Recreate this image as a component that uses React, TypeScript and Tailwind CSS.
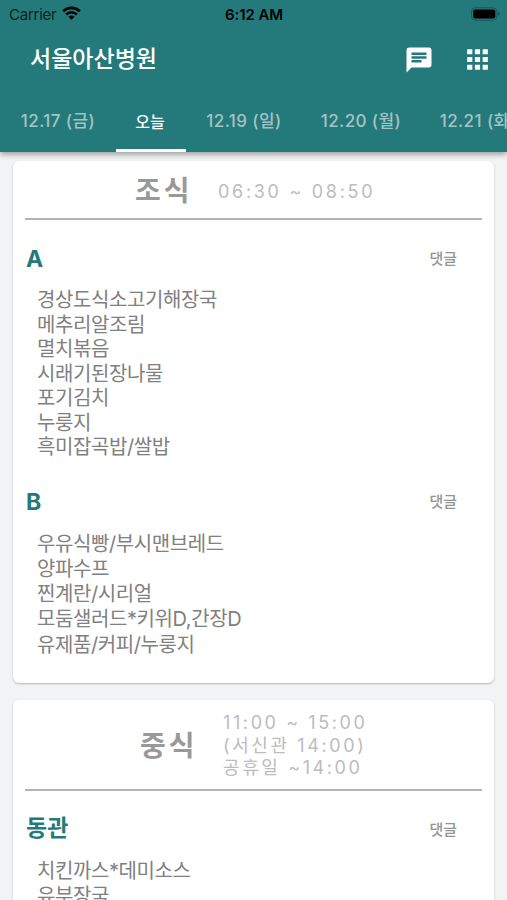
import clsx from 'clsx'

interface Course {
  name: string
  menu: string[]
}

interface Meal {
  title: string
  hours: string[]
  courses: Course[]
}

const TABS = ['12.17 (금)', '오늘', '12.19 (일)', '12.20 (월)', '12.21 (화)']

const MEALS: Meal[] = [
  {
    title: '조식',
    hours: ['06:30 ~ 08:50'],
    courses: [
      {
        name: 'A',
        menu: [
          '경상도식소고기해장국',
          '메추리알조림',
          '멸치볶음',
          '시래기된장나물',
          '포기김치',
          '누룽지',
          '흑미잡곡밥/쌀밥',
        ],
      },
      {
        name: 'B',
        menu: [
          '우유식빵/부시맨브레드',
          '양파수프',
          '찐계란/시리얼',
          '모둠샐러드*키위D,간장D',
          '유제품/커피/누룽지',
        ],
      },
    ],
  },
  {
    title: '중식',
    hours: ['11:00 ~ 15:00', '(서신관 14:00)', '공휴일 ~14:00'],
    courses: [{ name: '동관', menu: ['치킨까스*데미소스', '유부장국'] }],
  },
]

export default function App() {
  return (
    <div className="flex h-[900px] w-[507px] flex-col overflow-hidden bg-[#f1f3f5] font-['Inter','Noto_Sans_CJK_KR',sans-serif]">
      <header className="relative z-10 h-[152px] shrink-0 bg-[#24797b] shadow-[0_2px_6px_rgba(0,0,0,0.4)]">
        <StatusBar />
        <div className="flex h-[62px] items-center pl-[30px] pr-[17px]">
          <h1 className="flex-1 text-[23px] font-medium leading-none text-white">
            서울아산병원
          </h1>
          <ChatIcon />
          <AppsIcon />
        </div>
        <Tabs />
      </header>

      <main className="flex flex-col gap-[17px] px-[13px] pt-[9px]">
        {MEALS.map((meal) => (
          <MealCard key={meal.title} meal={meal} />
        ))}
      </main>
    </div>
  )
}

function StatusBar() {
  return (
    <div className="flex h-[28px] items-center pl-[9px] pr-[6px] text-[15px] leading-none text-[#0b1f20]">
      <div className="flex flex-1 items-center gap-[6px]">
        <span className="tracking-[-0.25px]">Carrier</span>
        <svg width="19" height="14" viewBox="0 0 19 14" fill="none" stroke="#000" className="-mt-[2px]">
          <path d="M1.2 5.2a11.8 11.8 0 0 1 16.6 0" strokeWidth="2.7" />
          <path d="M4.2 8.5a7.6 7.6 0 0 1 10.6 0" strokeWidth="2.5" />
          <path d="M9.5 13.8l-3-3.1a4.2 4.2 0 0 1 6 0z" fill="#000" stroke="none" />
        </svg>
      </div>
      <span className="-ml-[2px] font-semibold tracking-[-0.1px] text-black">6:12 AM</span>
      <div className="-mt-[1px] flex flex-1 justify-end">
        <svg width="30" height="14" viewBox="0 0 30 14">
          <rect x="0.5" y="0.8" width="25.5" height="12.4" rx="3.6" fill="none" stroke="#17585a" />
          <rect x="2.2" y="2.5" width="22.1" height="9" rx="2" fill="#000" />
          <path d="M27.3 5v4c1-.4 1.6-1.1 1.6-2s-.6-1.6-1.6-2z" fill="#17585a" />
        </svg>
      </div>
    </div>
  )
}

function Tabs() {
  return (
    <nav className="flex h-[62px] overflow-hidden font-medium">
      {TABS.map((tab, i) => {
        const active = i === 1
        return (
          <button
            key={tab}
            className={clsx(
              'shrink-0 whitespace-nowrap border-b-[3px] pt-[4px]',
              active
                ? 'w-[70px] border-white pr-[2px] text-[16px] text-white'
                : 'border-transparent text-[17px] tracking-[0.4px] text-[#a3c3c4]',
              i === 0 && 'w-[116px]',
              i > 1 && 'w-[117px] pr-px',
            )}
          >
            {tab}
          </button>
        )
      })}
    </nav>
  )
}

function MealCard({ meal }: { meal: Meal }) {
  const multi = meal.hours.length > 1
  return (
    <section className="rounded-[6px] bg-white px-[12px] pb-[22px] shadow-[0_1px_2px_rgba(0,0,0,0.25)]">
      <div
        className={clsx(
          'flex items-center border-b-2 border-[#b4b4b4]',
          multi ? 'h-[91px] pl-[115px]' : 'h-[59px] pl-[110px]',
        )}
      >
        <h2 className="w-[83px] pt-[2px] text-[28px] font-bold leading-none tracking-[3px] text-[#999]">
          {meal.title}
        </h2>
        <div
          className={clsx(
            'text-[18px] leading-[22.5px] text-[#bcbcbc]',
            multi ? 'pt-[3px] tracking-[2.6px]' : 'pt-[5px] tracking-[2.7px]',
          )}
        >
          {meal.hours.map((line) => (
            <p key={line}>{line}</p>
          ))}
        </div>
      </div>
      {meal.courses.map((course) => (
        <CourseBlock key={course.name} course={course} />
      ))}
    </section>
  )
}

function CourseBlock({ course }: { course: Course }) {
  return (
    <div className="pt-[22px]">
      <div className="flex h-[32px] items-center justify-between pl-px pr-[25px]">
        <h3
          className={clsx(
            'text-[23px] font-bold leading-none text-[#24797b]',
            course.name.length > 1 ? 'pb-px' : 'pt-[2px]',
          )}
        >
          {course.name}
        </h3>
        <button className="text-[15px] font-medium leading-none text-[#959595]">댓글</button>
      </div>
      <ul className="pb-[3px] pl-[12px] pt-[14px] text-[20px] tracking-[-0.4px] text-[#808080]">
        {course.menu.map((item) => (
          <li
            key={item}
            className={/[/,]/.test(item) ? 'leading-[25.5px]' : 'leading-[24.5px]'}
          >
            {item}
          </li>
        ))}
      </ul>
    </div>
  )
}

function ChatIcon() {
  return (
    <svg width="30" height="30" viewBox="0 0 24 24" fill="#fff" className="mr-[28px] mt-px">
      <path d="M20 2H4c-1.100 0-1.990.9-1.990 2L2 22l4-4h14c1.100 0 2-.9 2-2V4c0-1.100-.9-2-2-2zM6 9h12v2H6V9zm8 5H6v-2h8v2zm4-6H6V6h12v2z" />
    </svg>
  )
}

function AppsIcon() {
  return (
    <svg width="31" height="31" viewBox="0 0 24 24" fill="#fff" className="mr-[-3px] mt-px">
      <path d="M4 8h4V4H4v4zm6 12h4v-4h-4v4zm-6 0h4v-4H4v4zm0-6h4v-4H4v4zm6 0h4v-4h-4v4zm6-10v4h4V4h-4zm-6 4h4V4h-4v4zm6 6h4v-4h-4v4zm0 6h4v-4h-4v4z" />
    </svg>
  )
}
